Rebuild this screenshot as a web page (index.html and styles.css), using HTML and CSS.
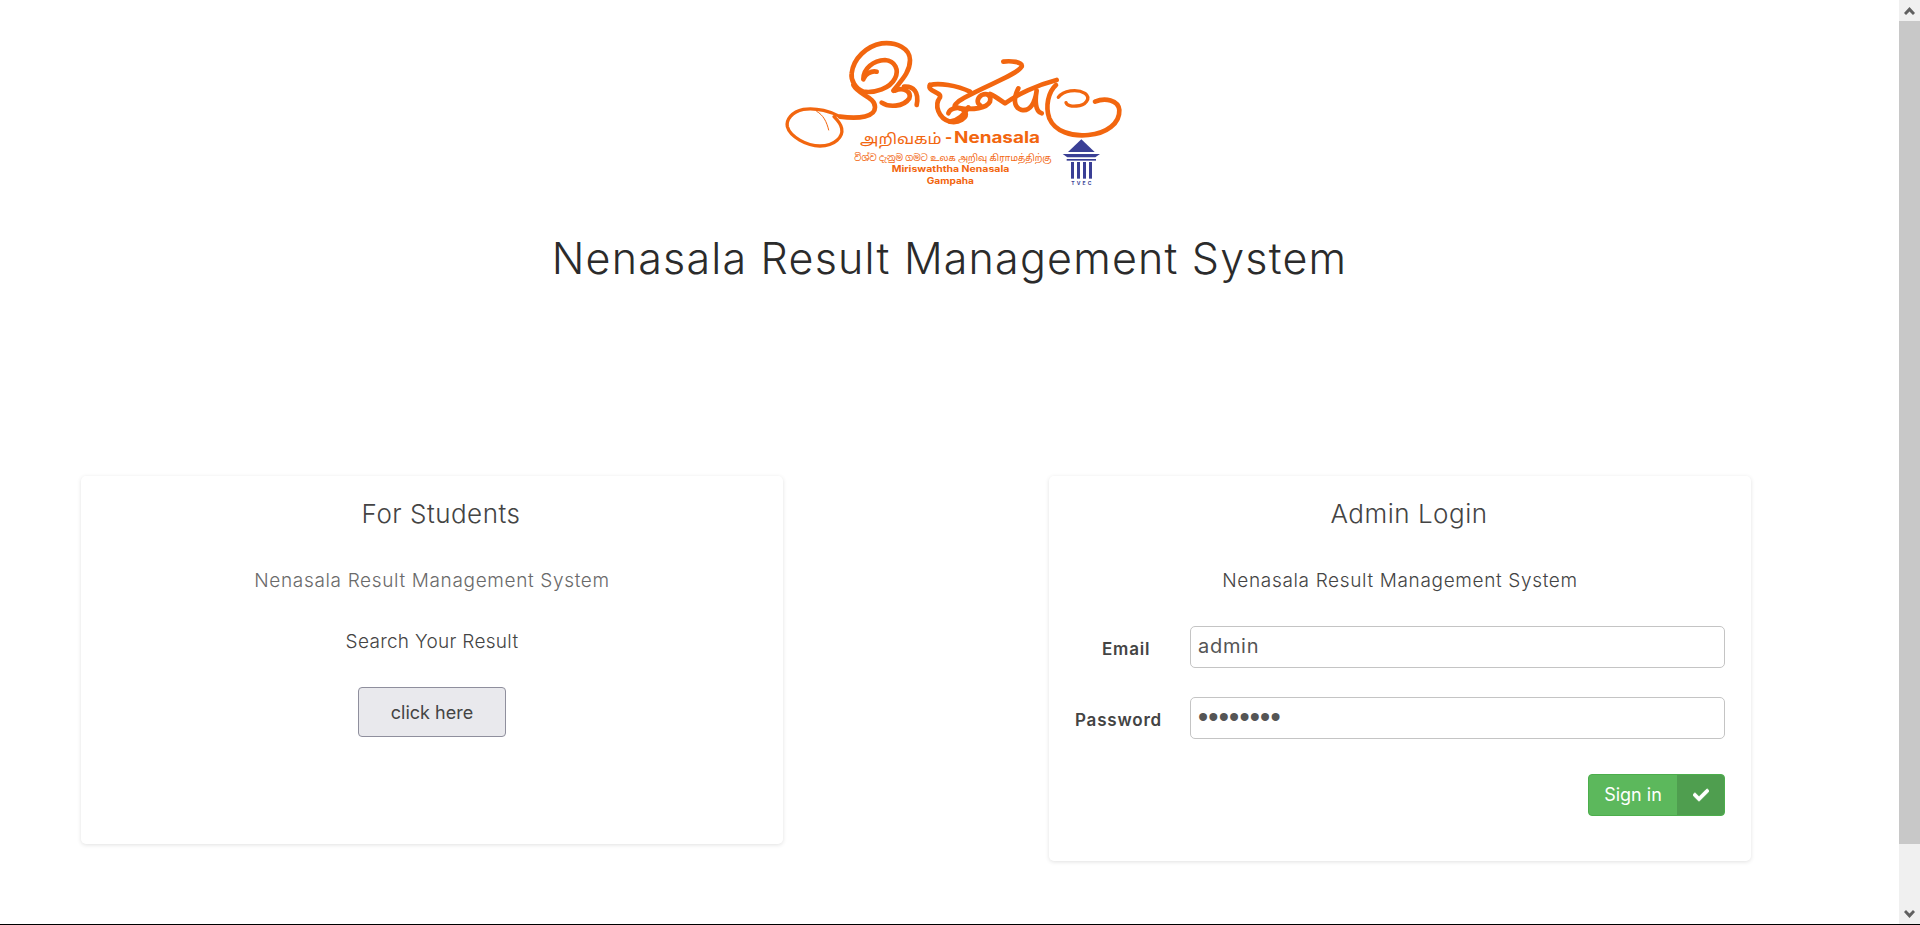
FILE: index.html
```html
<!DOCTYPE html>
<html lang="en">
<head>
    <meta charset="UTF-8">
    <title>Nenasala Result Management System</title>
    <meta name="viewport" content="width=device-width, initial-scale=1">
    <link rel="stylesheet" href="styles.css">
</head>
<body>

    <div class="page">
        <!--logo and title-->
        <header class="top">
            <svg class="logo" viewBox="0 0 1140 540" width="380" height="180" role="img" aria-label="Nenasala">
                <g class="ink">
                    <!--spiral-->
                    <path d="M350 155C335 150 312 165 310 178C310 145 340 122 375 120C405 122 418 150 405 175C390 205 345 220 310 215C285 205 272 180 275 160C280 115 320 78 365 70C410 65 450 85 450 120C450 160 420 185 400 212"/>
                    <path d="M280 195C295 225 345 230 345 262C345 290 300 298 240 290"/>
                    <!--mouse-->
                    <path class="mid" d="M240 290C215 275 170 262 130 268C95 275 78 300 82 320C90 350 140 378 180 378C225 378 250 350 245 325C242 310 232 300 222 290"/>
                    <path class="thin" d="M170 274C190 285 200 305 206 330"/>
                    <!--letters-->
                    <path d="M365 248C385 262 430 262 448 235C455 215 430 200 405 212"/>
                    <path d="M432 200C460 198 478 215 470 255"/>
                    <path d="M510 195C535 188 590 195 630 215"/>
                    <path d="M510 195C500 215 545 215 540 232C522 255 535 295 570 305C595 310 625 295 615 275C600 255 570 265 565 280"/>
                    <path d="M570 305C600 300 615 280 625 262"/>
                    <path d="M730 125C750 122 790 125 785 140C770 165 680 195 610 235C590 245 575 262 590 262"/>
                    <path d="M600 265C640 270 680 265 690 245C695 225 680 218 665 225C650 235 650 250 660 255"/>
                    <path d="M690 222C705 228 720 240 735 250C770 225 830 195 890 180"/>
                    <path d="M775 205C760 235 760 262 785 270C810 275 825 250 830 212C825 240 825 275 845 280"/>
                    <path d="M888 195C865 215 855 260 868 295C885 335 935 350 985 345C1040 340 1080 310 1078 270C1075 240 1035 232 1005 245"/>
                    <path class="mid" d="M895 232C910 212 950 205 975 220C995 235 975 258 950 258C935 260 920 256 918 248"/>
                </g>
                <text class="logo-big" x="300" y="371" textLength="245" lengthAdjust="spacingAndGlyphs">அறிவகம்</text>
                <text class="logo-bold" x="555" y="369">-</text>
                <text class="logo-bold" x="582" y="369" textLength="258" lengthAdjust="spacingAndGlyphs">Nenasala</text>
                <text class="logo-small" x="283" y="424" textLength="592" lengthAdjust="spacingAndGlyphs">විශ්ව දැනුම ගමට  உலக அறிவு கிராமத்திற்கு</text>
                <text class="logo-line" x="395" y="457" textLength="353" lengthAdjust="spacingAndGlyphs">Miriswaththa Nenasala</text>
                <text class="logo-line" x="500" y="493" textLength="142" lengthAdjust="spacingAndGlyphs">Gampaha</text>
                <g class="blue">
                    <polygon points="964,358 1004,396 924,396"/>
                    <polygon points="908,402 1020,402 1006,412 922,412"/>
                    <rect x="920" y="417" width="88" height="5"/>
                    <rect x="933" y="426" width="9" height="50"/>
                    <rect x="951" y="426" width="9" height="50"/>
                    <rect x="969" y="426" width="9" height="50"/>
                    <rect x="987" y="426" width="9" height="50"/>
                </g>
                <text class="logo-tvec" x="934" y="494" textLength="60">TVEC</text>
            </svg>
            <h1>Nenasala Result Management System</h1>
        </header>

        <main class="cards">
            <!--students-->
            <section class="card card-student">
                <h2>For Students</h2>
                <p class="sub sub-grey">Nenasala Result Management System</p>
                <p class="search">Search Your Result</p>
                <button class="click-btn" type="button">click here</button>
            </section>

            <!--admin-->
            <section class="card card-admin">
                <h2>Admin Login</h2>
                <p class="sub">Nenasala Result Management System</p>
                <form class="login">
                    <div class="row">
                        <label class="label label-email" for="email">Email</label>
                        <input class="field" id="email" type="text" value="admin">
                    </div>
                    <div class="row">
                        <label class="label label-pass" for="pass">Password</label>
                        <input class="field" id="pass" type="password" value="password">
                    </div>
                    <button class="signin" type="button">
                        <span class="signin-text">Sign in</span>
                        <span class="signin-icon">
                            <svg viewBox="0 0 512 512" width="16" height="16"><path fill="#fff" stroke="#fff" stroke-width="30" d="M173.898 439.404l-166.4-166.4c-9.997-9.997-9.997-26.206 0-36.204l36.203-36.204c9.997-9.998 26.207-9.998 36.204 0L192 312.69 432.095 72.596c9.997-9.997 26.207-9.997 36.204 0l36.203 36.204c9.997 9.997 9.997 26.206 0 36.204l-294.4 294.401c-9.998 9.997-26.207 9.997-36.204-.001z"/></svg>
                        </span>
                    </button>
                </form>
            </section>
        </main>
    </div>

    <!--scrollbar-->
    <div class="scrollbar">
        <div class="scroll-btn">
            <svg viewBox="0 0 11 8" width="11" height="8"><path d="M0 6l5.5-6L11 6 9 8 5.5 4.4 2 8z"/></svg>
        </div>
        <div class="scroll-thumb"></div>
        <div class="scroll-rest"></div>
        <div class="scroll-btn">
            <svg viewBox="0 0 11 8" width="11" height="8"><path d="M0 2l5.5 6L11 2 9 0 5.5 3.6 2 0z"/></svg>
        </div>
    </div>

</body>
</html>
```

FILE: styles.css
```css
*{margin:0;padding:0;box-sizing:border-box;}

body{
    display: flex;
    height: 925px;
    overflow: hidden;
    background-color: #fff;
    border-bottom: 1px solid #000;

    color: #444;
    font-family: "Inter", "Noto Sans", "Noto Sans Tamil", "Noto Sans Sinhala", sans-serif;
}

.page{
    flex: 1;
    min-width: 0;
}

/*scrollbar*/
.scrollbar{
    display: flex;
    flex-direction: column;
    flex: none;
    width: 21px;
    background-color: #f0f0f0;
}
.scroll-btn{
    display: flex;
    align-items: center;
    justify-content: center;
    flex: none;
    height: 21px;
}
.scroll-btn path{
    fill: #606060;
}
.scroll-thumb{
    flex: none;
    height: 823px;
    background-color: #c8c8c8;
}
.scroll-rest{
    flex: 1;
}

/*top*/
.top{
    padding-top: 20px;
    text-align: center;
}
.logo{
    display: block;
    margin: 0 auto;
}
.ink path{
    fill: none;
    stroke: #f2660f;
    stroke-width: 14;
    stroke-linecap: round;
    stroke-linejoin: round;
}
.ink path.thin{
    stroke-width: 3;
}
.ink path.mid{
    stroke-width: 10;
}
.blue{
    fill: #3a3f95;
}
.logo text{
    fill: #f2660f;
}
.logo-big{
    font-size: 44px;
}
.logo-bold{
    font-size: 46px;
    font-weight: 700;
}
.logo-small{
    font-size: 28px;
}
.logo-line{
    font-size: 26px;
    font-weight: 700;
}
.logo .logo-tvec{
    fill: #3a3f95;
    font-size: 15px;
    font-weight: 700;
}
.top h1{
    margin-top: 34px;

    color: #2b2b2b;
    font-size: 43px;
    font-weight: 300;
    line-height: 48px;
    letter-spacing: 1.2px;
}

/*cards*/
.cards{
    display: flex;
    align-items: flex-start;
    gap: 266px;
    padding: 194px 0 0 81px;
}
.card{
    flex: none;
    width: 702px;
    padding-top: 23px;
    border-radius: 5px;
    background-color: #fff;
    box-shadow: 0 1px 4px rgba(0,0,0,.12);
    text-align: center;
}
.card-student{
    height: 368px;
}
.card-admin{
    height: 385px;
}
.card h2{
    padding-left: 18px;

    color: #444;
    font-size: 26px;
    font-weight: 300;
    line-height: 30px;
    letter-spacing: .5px;
}
.sub{
    margin-top: 39px;

    color: #444;
    font-size: 19px;
    font-weight: 300;
    line-height: 26px;
    letter-spacing: .65px;
}
.sub-grey{
    color: #6a6a6a;
}
.search{
    margin-top: 35px;

    color: #444;
    font-size: 19px;
    font-weight: 300;
    line-height: 26px;
    letter-spacing: .3px;
}
.click-btn{
    width: 148px;
    height: 50px;
    margin-top: 32px;

    background-color: #e9e9ed;
    border: 1px solid #8f8f9d;
    border-radius: 4px;

    color: #444;
    font-family: inherit;
    font-size: 18px;
    font-weight: 400;
}

/*login*/
.login{
    display: flex;
    flex-direction: column;
    padding-top: 32px;
    padding-right: 26px;
}
.row{
    display: flex;
    align-items: center;
    height: 42px;
    margin-bottom: 29px;
}
.label{
    flex: none;
    width: 141px;

    color: #444;
    font-size: 17px;
    font-weight: 600;
    line-height: 26px;
    letter-spacing: .8px;
    text-align: left;
}
.label-email{
    padding-left: 53px;
    padding-top: 3px;
}
.label-pass{
    padding-left: 26px;
    padding-top: 3px;
}
.field{
    flex: 1;
    height: 42px;
    padding: 0 7px 2px;

    background-color: #fff;
    border: 1px solid #c4c4c4;
    border-radius: 5px;
    outline: none;

    color: #555;
    font-family: inherit;
    font-size: 20px;
    font-weight: 400;
    letter-spacing: .7px;
}
#pass{
    font-family: "Liberation Sans", sans-serif;
    font-size: 29px;
    letter-spacing: .2px;
}
.signin{
    align-self: flex-end;
    display: flex;
    width: 137px;
    height: 42px;
    margin-top: 6px;
    overflow: hidden;

    background-color: #5cb85c;
    border: 1px solid #4cae4c;
    border-radius: 4px;

    color: #fff;
    font-family: inherit;
    font-size: 18px;
    font-weight: 400;
}
.signin-text{
    flex: 1;
    line-height: 40px;
}
.signin-icon{
    display: flex;
    align-items: center;
    justify-content: center;
    width: 47px;
    height: 40px;
    background-color: #4f9e4f;
}
```
